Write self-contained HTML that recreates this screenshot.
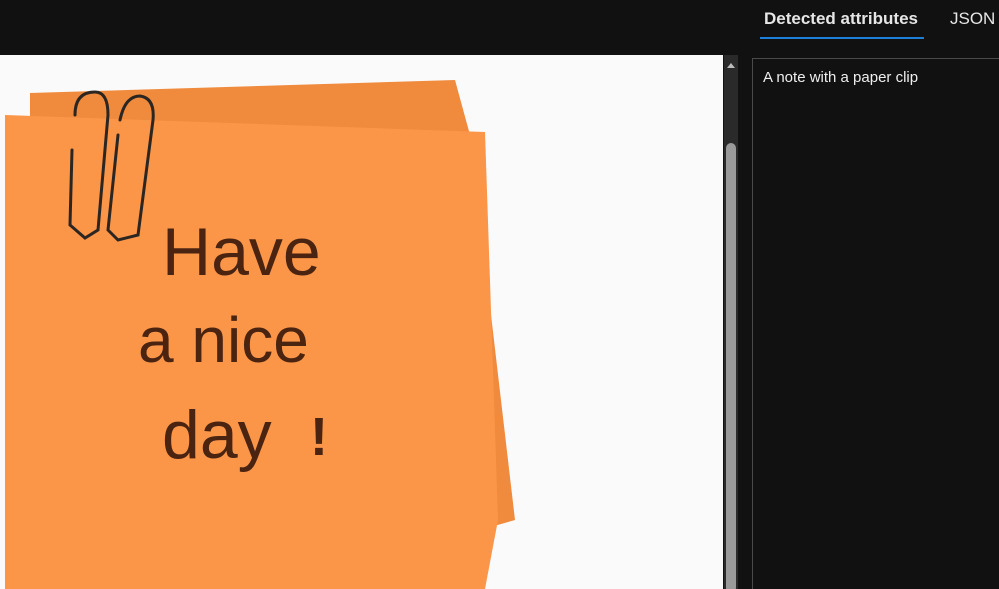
<!DOCTYPE html>
<html><head><style>
html,body{margin:0;width:999px;height:589px;background:#111;overflow:hidden;font-family:"Liberation Sans",sans-serif;position:relative}
.tab{position:absolute;top:9px;color:#e6e6e6;font-size:17px}
.img{position:absolute;left:0;top:55px;width:723px;height:534px;background:#fafafa;overflow:hidden}
.sb{position:absolute;left:724px;top:55px;width:14px;height:534px;background:#2a2a2a}
.panel{position:absolute;left:752px;top:58px;width:260px;height:540px;border:1px solid #4a4a4a;border-right:none;background:#111}
</style></head><body>
<div class="tab" style="left:764px;font-weight:bold">Detected attributes</div>
<div style="position:absolute;left:760px;top:37px;width:164px;height:2px;background:#1e7fd8"></div>
<div class="tab" style="left:950px">JSON</div>
<div class="img">
<svg width="723" height="534" viewBox="0 55 723 534" style="display:block">
<polygon points="30,93 455,80 470,135 515,520 480,530 50,589 30,589" fill="#f08a3c"/>
<polygon points="5,115 485,132 498,520 485,589 5,589" fill="#fb9548"/>
<g fill="none" stroke="#2b2622" stroke-width="3" stroke-linecap="round">
<path d="M75,115 Q75,92 95,92 Q108,92 108,115 L98,230 L85,238 L70,225 L72,150"/>
<path d="M118,135 L108,230 L118,240 L138,235 L153,120 Q155,98 140,96 Q125,96 120,120"/>
</g>
<g fill="#4a2410" font-family="'Liberation Sans',sans-serif">
<text x="162" y="275" font-size="68">Have</text>
<text x="138" y="362" font-size="64">a nice</text>
<text x="162" y="458" font-size="68">day</text>
<text x="310" y="455" font-size="54" font-weight="bold">!</text>
</g>
</svg>
</div>
<div class="sb"><div style="position:absolute;left:3px;top:8px;border:4px solid transparent;border-bottom:5px solid #bbb;border-top:0"></div><div style="position:absolute;left:2px;top:88px;width:10px;height:450px;background:#9a9a9a;border-radius:5px"></div></div>
<div class="panel"><div style="position:absolute;left:10px;top:10px;color:#eee;font-size:15px">A note with a paper clip</div></div>
</body></html>
